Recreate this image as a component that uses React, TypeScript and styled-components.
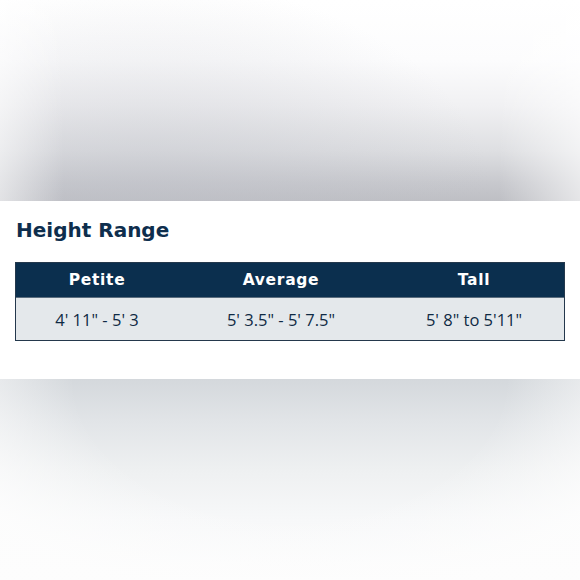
import React from 'react';
import styled, { createGlobalStyle } from 'styled-components';

interface Column {
  label: string;
  range: string;
}

const columns: Column[] = [
  { label: 'Petite', range: `4' 11" - 5' 3` },
  { label: 'Average', range: `5' 3.5" - 5' 7.5"` },
  { label: 'Tall', range: `5' 8" to 5'11"` },
];

const GlobalStyle = createGlobalStyle`
  html, body {
    margin: 0;
    padding: 0;
    background: #ffffff;
  }
  body {
    font-family: "DejaVu Sans", "Liberation Sans", sans-serif;
  }
`;

const App: React.FC = () => (
  <>
    <GlobalStyle />
    <Page>
      <TopShade />
      <Section>
        <Title>Height Range</Title>
        <Table>
          {columns.map(col => (
            <HeadCell key={col.label}>{col.label}</HeadCell>
          ))}
          {columns.map(col => (
            <DataCell key={col.range}>{col.range}</DataCell>
          ))}
        </Table>
      </Section>
      <BottomShade />
    </Page>
  </>
);

export default App;

const Page = styled.div`
  width: 580px;
  height: 580px;
  display: flex;
  flex-direction: column;
  overflow: hidden;
`;

const TopShade = styled.div`
  height: 201px;
  flex-shrink: 0;
  background:
    linear-gradient(to right, rgba(255, 255, 255, 0.55) 0%, rgba(255, 255, 255, 0) 11%, rgba(255, 255, 255, 0) 86%, rgba(255, 255, 255, 0.6) 100%),
    radial-gradient(ellipse 60% 110% at 25% 100%, rgba(190, 192, 200, 0.45), rgba(190, 192, 200, 0) 100%),
    linear-gradient(to bottom, #ffffff 0%, #fcfcfd 30%, #f1f1f3 52%, #dedfe2 75%, #c6c7cc 92%, #bebfc4 100%);
`;

const Section = styled.section`
  height: 178px;
  flex-shrink: 0;
  box-sizing: border-box;
  padding: 16px 15px 0 15px;
  background: #ffffff;
`;

const Title = styled.h2`
  margin: 0 0 19px 1px;
  font-size: 20px;
  line-height: 26px;
  font-weight: 700;
  color: #0e2e4d;
`;

const Table = styled.div`
  width: 550px;
  display: grid;
  grid-template-columns: 162px 206px 1fr;
  grid-template-rows: 35px 42px;
  border: 1.5px solid #24384c;
  box-sizing: border-box;
`;

const HeadCell = styled.div`
  display: flex;
  align-items: center;
  justify-content: center;
  background: #0b2f4e;
  color: #ffffff;
  font-size: 15.5px;
  font-weight: 700;
  letter-spacing: 0.7px;
  border-bottom: 1px solid #5b6d7e;
`;

const DataCell = styled.div`
  display: flex;
  align-items: center;
  justify-content: center;
  background: #e4e8eb;
  color: #0f2a44;
  font-family: "Open Sans", "DejaVu Sans", sans-serif;
  font-size: 16.5px;
  font-weight: 500;
`;

const BottomShade = styled.div`
  flex: 1;
  background:
    radial-gradient(ellipse 62% 115% at 50% 0%, rgba(253, 253, 253, 0) 60%, rgba(253, 253, 253, 0.9) 100%),
    linear-gradient(to bottom, #d4d8dc 0%, #e2e5e8 22%, #eef0f1 45%, #f7f8f9 70%, #fdfdfd 100%);
`;
